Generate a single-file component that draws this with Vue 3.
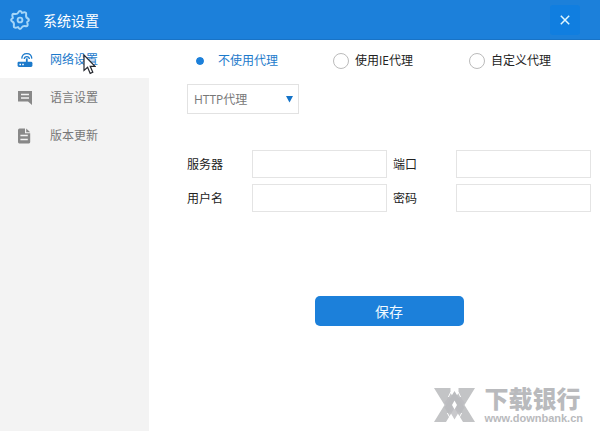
<script setup>
import { ref } from 'vue'

const active = ref('network')
const proxyMode = ref('none')
const proxyType = ref('http')
const form = ref({ server: '', port: '', user: '', password: '' })

const menu = [
  { id: 'network', label: '网络设置' },
  { id: 'language', label: '语言设置' },
  { id: 'update', label: '版本更新' },
]
const modes = [
  { id: 'none', label: '不使用代理' },
  { id: 'ie', label: '使用IE代理' },
  { id: 'custom', label: '自定义代理' },
]
const fields = [
  { id: 'server', label: '服务器', type: 'text' },
  { id: 'port', label: '端口', type: 'text' },
  { id: 'user', label: '用户名', type: 'text' },
  { id: 'password', label: '密码', type: 'password' },
]
</script>

<template>
  <div class="window">
    <header class="titlebar">
      <svg class="gear" viewBox="0 0 20 20" aria-hidden="true">
        <path
          d="M8 2.9 Q10 -0.7 12 2.9 Q16.4 1.4 16.2 3.8 Q15.6 7.2 17.1 8 Q20.7 10 17.1 12 Q18.6 16.4 16.2 16.2 Q12.8 15.6 12 17.1 Q10 20.7 8 17.1 Q3.6 18.6 3.8 16.2 Q4.4 12.8 2.9 12 Q-0.7 10 2.9 8 Q1.4 3.6 3.8 3.8 Q7.2 4.4 8 2.9 Z"
          fill="none" stroke="currentColor" stroke-width="2" stroke-linejoin="round"
        />
        <circle cx="10" cy="10" r="2.4" fill="none" stroke="currentColor" stroke-width="1.9" />
      </svg>
      <h1>系统设置</h1>
      <button class="close" type="button" aria-label="关闭">
        <svg viewBox="0 0 10 10"><path d="M0.8 0.8 L9.2 9.2 M9.2 0.8 L0.8 9.2" stroke="currentColor" stroke-width="1.5" /></svg>
      </button>
    </header>

    <div class="body">
      <nav class="sidebar">
        <button
          v-for="item in menu" :key="item.id" type="button" class="item"
          :class="{ active: active === item.id }" @click="active = item.id"
        >
          <svg v-if="item.id === 'network'" viewBox="0 0 16 16" class="icon">
            <path d="M1.5 9.8 H14 Q15.4 9.8 15.4 11.2 V13.6 Q15.4 15 14 15 H2 Q0.6 15 0.6 13.6 V11.2 Q0.6 9.8 1.5 9.8 Z" fill="currentColor" />
            <path d="M2.4 11.8 h1.6 v1.4 h-1.6 z M5.2 11.8 h1.6 v1.4 h-1.6 z" fill="#fff" />
            <path d="M9.8 10 V6.4" stroke="currentColor" stroke-width="1.8" />
            <path d="M7.2 7 Q7.4 4.6 9.8 4.6 Q12.2 4.6 12.4 7 M4.8 6.6 Q5 1.6 9.8 1.6 Q14.6 1.6 14.8 6.6" fill="none" stroke="currentColor" stroke-width="1.3" />
          </svg>
          <svg v-else-if="item.id === 'language'" viewBox="0 0 16 16" class="icon">
            <path d="M1 1 H15 V15 L11 11.6 H1 Z" fill="currentColor" />
            <path d="M4 4.5 H12 M4 8 H12" stroke="#f3f3f3" stroke-width="1.6" />
          </svg>
          <svg v-else viewBox="0 0 16 16" class="icon">
            <path d="M2.5 0.6 H8 V5.2 H13.2 V14 Q13.2 15.4 12 15.4 H2.2 Q1 15.4 1 14 V2.2 Q1 0.6 2.5 0.6 Z" fill="currentColor" />
            <path d="M9.2 0.6 L13.2 4.2 H9.2 Z" fill="currentColor" />
            <path d="M3.4 7.6 H10.8 M3.4 11.4 H10.8" stroke="#f3f3f3" stroke-width="1.5" />
          </svg>
          <span>{{ item.label }}</span>
        </button>
      </nav>

      <main class="content">
        <div class="modes" role="radiogroup" aria-label="代理">
          <label v-for="m in modes" :key="m.id" class="mode" :class="{ chosen: proxyMode === m.id }">
            <input v-model="proxyMode" type="radio" name="mode" :value="m.id" />
            <span>{{ m.label }}</span>
          </label>
        </div>

        <div class="type">
          <select v-model="proxyType" aria-label="代理类型">
            <option value="http">HTTP代理</option>
          </select>
          <svg viewBox="0 0 7 7" aria-hidden="true"><path d="M0 0 H7 L3.5 6.5 Z" fill="#1473c8" /></svg>
        </div>

        <form class="fields" @submit.prevent>
          <template v-for="f in fields" :key="f.id">
            <label :for="f.id">{{ f.label }}</label>
            <input :id="f.id" v-model="form[f.id]" :type="f.type" autocomplete="off" />
          </template>
          <button class="save" type="submit">保存</button>
        </form>
      </main>
    </div>

    <div class="brand">
      <svg viewBox="0 0 41 34" aria-hidden="true">
        <path d="M0 0 H16.5 V5 L20.5 11 L24.5 5 V0 H41 L30.5 17 L41 34 H29 L20.5 20 L12 34 H0 L10.5 17 Z" fill="#c3c4c6" />
        <path d="M20.5 3 L30.5 19.5 L26.5 26 L20.5 16 L14.5 26 L10.5 19.5 Z" fill="#bbbcbf" />
        <path d="M20.5 31.5 L30.5 14.5 L26 8.5 L20.5 18 L15 8.5 L10.5 14.5 Z" fill="#bbbcbf" fill-opacity="0.8" />
        <path d="M16.8 4 L14.4 9 M24.2 4 L26.6 9 M15.5 29 L13.4 25 M25.5 29 L27.6 25" fill="none" stroke="#fff" stroke-width="1" />
        <path d="M20.5 12.5 L23 17 L20.5 21.5 L18 17 Z" fill="#fff" />
      </svg>
      <div>
        <strong>下载银行</strong>
        <span>www.downbank.cn</span>
      </div>
    </div>

    <svg class="pointer" viewBox="0 0 13 21" aria-hidden="true">
      <path d="M1 1 V16.4 L4.6 13.2 L7.2 19.4 L9.8 18.3 L7.2 12.3 H12 Z" fill="#fff" stroke="#25282f" stroke-width="1.2" />
    </svg>
  </div>
</template>

<style>
body {
  margin: 0;
  background: #fff;
}
</style>

<style scoped>
* {
  box-sizing: border-box;
}
.window {
  position: relative;
  display: flex;
  flex-direction: column;
  min-height: 100vh;
  font: 12px/18px "Open Sans", "Noto Sans CJK SC", sans-serif;
  color: #222;
}
button,
input,
select {
  font: inherit;
  margin: 0;
}
.titlebar {
  display: flex;
  align-items: center;
  height: 40px;
  padding: 0 20px 0 10px;
  background: #1c80da;
  border-bottom: 1px solid #1873c6;
  color: #fff;
}
.gear {
  width: 20px;
  height: 20px;
  margin-right: 13px;
  color: #a5d6f8;
}
h1 {
  flex: 1;
  margin: 0;
  padding-top: 2px;
  font-size: 14px;
  font-weight: 400;
}
.close {
  display: grid;
  place-items: center;
  width: 30px;
  height: 30px;
  padding: 0;
  border: 0;
  border-radius: 3px;
  background: #107ee0;
  color: #e0f7ff;
}
.close svg {
  width: 10px;
  height: 10px;
}
.body {
  display: flex;
  flex: 1;
}
.sidebar {
  flex: none;
  width: 149px;
  background: #f3f3f3;
}
.item {
  display: flex;
  align-items: center;
  gap: 17px;
  width: 100%;
  height: 38px;
  padding: 2px 17px 0;
  border: 0;
  background: transparent;
  color: #777;
}
.item.active {
  background: #fff;
  color: #1c7acb;
}
.icon {
  width: 16px;
  height: 16px;
  color: #888;
}
.active .icon {
  color: #1c7acb;
}
.content {
  flex: 1;
  padding: 12px 9px 0 38px;
}
.modes {
  display: grid;
  grid-template-columns: 141px 136px 1fr;
  padding-left: 5px;
}
.mode {
  display: flex;
  align-items: center;
  gap: 6px;
}
.mode input {
  appearance: none;
  width: 16px;
  height: 16px;
  border: 1px solid #bbb;
  border-radius: 50%;
  background: #fff;
}
.mode.chosen {
  gap: 10px;
  color: #1c7acb;
}
.mode.chosen input {
  border: 4px solid #fff;
  background: #1c80da;
  background-clip: padding-box;
}
.type {
  display: flex;
  align-items: center;
  width: 112px;
  height: 30px;
  margin-top: 14px;
}
.type select {
  appearance: none;
  width: 100%;
  height: 100%;
  padding: 2px 20px 0 6px;
  border: 1px solid #e2e2e2;
  border-radius: 0;
  background: #fff;
  color: #777;
}
.type svg {
  flex: none;
  width: 7px;
  height: 7px;
  margin-left: -13px;
  margin-right: 6px;
  pointer-events: none;
}
.fields {
  display: grid;
  grid-template-columns: 65px 1fr 69px 1fr;
  align-items: center;
  row-gap: 6px;
  margin-top: 36px;
}
.fields label {
  padding-top: 2px;
}
.fields label:nth-of-type(even) {
  padding-left: 6px;
}
.fields input {
  width: 100%;
  min-width: 0;
  height: 28px;
  padding: 0 6px;
  border: 1px solid #e4e4e4;
  background: #fff;
}
.save {
  grid-column: 1 / -1;
  justify-self: center;
  width: 149px;
  height: 30px;
  margin-top: 78px;
  padding: 2px 0 0;
  border: 0;
  border-radius: 5px;
  background: #1c80da;
  color: #f0faff;
  font-size: 14px;
}
.brand {
  position: absolute;
  right: 17px;
  bottom: 6px;
  display: flex;
  align-items: flex-start;
  gap: 9px;
  color: #b9babd;
  font-family: "Liberation Sans", "Noto Sans CJK SC", sans-serif;
  font-weight: 700;
}
.brand svg {
  width: 41px;
  height: 34px;
}
.brand strong,
.brand span {
  display: block;
}
.brand strong {
  font-size: 24px;
  line-height: 24px;
}
.brand span {
  font-size: 11px;
  line-height: 13px;
}
.pointer {
  position: absolute;
  left: 83px;
  top: 54px;
  width: 13px;
  height: 21px;
  pointer-events: none;
}
</style>
